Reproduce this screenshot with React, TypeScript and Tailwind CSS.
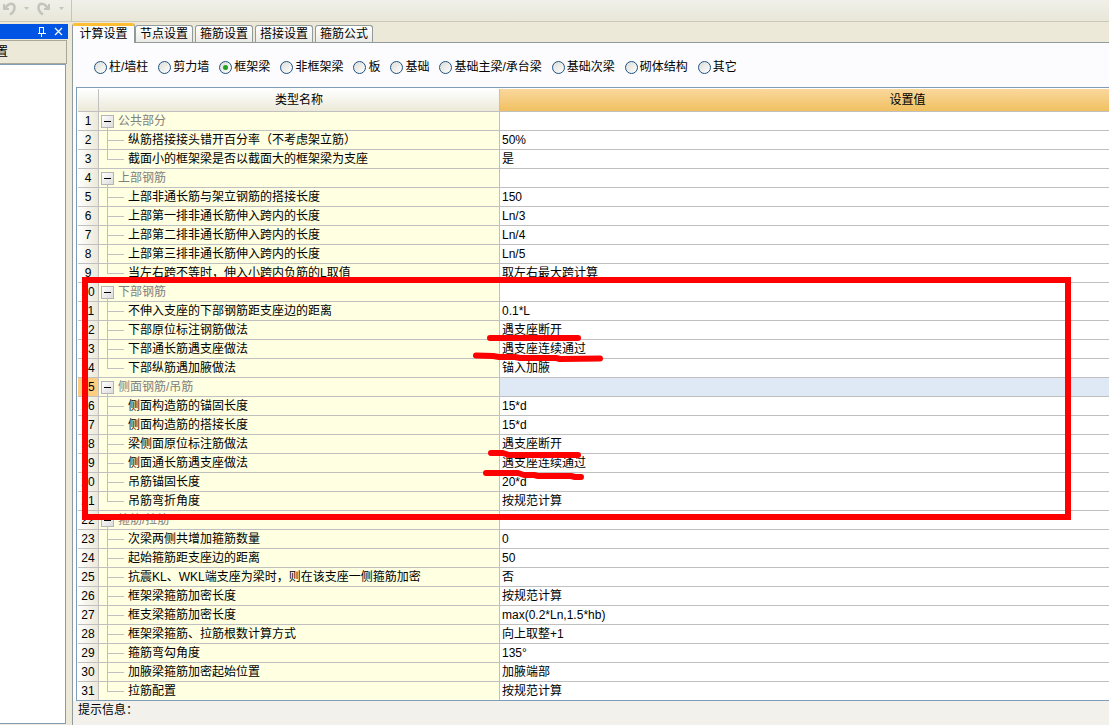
import React, { useState } from "react";
import clsx from "clsx";

interface Row {
  name: string;
  value?: string;
  group?: boolean;
}

const tabs = ["计算设置", "节点设置", "箍筋设置", "搭接设置", "箍筋公式"];

const memberTypes = [
  "柱/墙柱",
  "剪力墙",
  "框架梁",
  "非框架梁",
  "板",
  "基础",
  "基础主梁/承台梁",
  "基础次梁",
  "砌体结构",
  "其它",
];

const rows: Row[] = [
  { name: "公共部分", group: true },
  { name: "纵筋搭接接头错开百分率（不考虑架立筋）", value: "50%" },
  { name: "截面小的框架梁是否以截面大的框架梁为支座", value: "是" },
  { name: "上部钢筋", group: true },
  { name: "上部非通长筋与架立钢筋的搭接长度", value: "150" },
  { name: "上部第一排非通长筋伸入跨内的长度", value: "Ln/3" },
  { name: "上部第二排非通长筋伸入跨内的长度", value: "Ln/4" },
  { name: "上部第三排非通长筋伸入跨内的长度", value: "Ln/5" },
  { name: "当左右跨不等时，伸入小跨内负筋的L取值", value: "取左右最大跨计算" },
  { name: "下部钢筋", group: true },
  { name: "不伸入支座的下部钢筋距支座边的距离", value: "0.1*L" },
  { name: "下部原位标注钢筋做法", value: "遇支座断开" },
  { name: "下部通长筋遇支座做法", value: "遇支座连续通过" },
  { name: "下部纵筋遇加腋做法", value: "锚入加腋" },
  { name: "侧面钢筋/吊筋", group: true },
  { name: "侧面构造筋的锚固长度", value: "15*d" },
  { name: "侧面构造筋的搭接长度", value: "15*d" },
  { name: "梁侧面原位标注筋做法", value: "遇支座断开" },
  { name: "侧面通长筋遇支座做法", value: "遇支座连续通过" },
  { name: "吊筋锚固长度", value: "20*d" },
  { name: "吊筋弯折角度", value: "按规范计算" },
  { name: "箍筋/拉筋", group: true },
  { name: "次梁两侧共增加箍筋数量", value: "0" },
  { name: "起始箍筋距支座边的距离", value: "50" },
  { name: "抗震KL、WKL端支座为梁时，则在该支座一侧箍筋加密", value: "否" },
  { name: "框架梁箍筋加密长度", value: "按规范计算" },
  { name: "框支梁箍筋加密长度", value: "max(0.2*Ln,1.5*hb)" },
  { name: "框架梁箍筋、拉筋根数计算方式", value: "向上取整+1" },
  { name: "箍筋弯勾角度", value: "135°" },
  { name: "加腋梁箍筋加密起始位置", value: "加腋端部" },
  { name: "拉筋配置", value: "按规范计算" },
];

const Toolbar: React.FC = () => (
  <header className="flex h-[22px] border-b border-[#cbc8b8] bg-linear-to-b from-[#f0f0e9] to-[#e9e7d9]">
    <div className="flex w-[72px] items-start gap-2 border-r border-[#c8c5b5] pt-[2px] pl-[2px] text-[#c4c4bd]">
      <button aria-label="撤销">
        <svg width="14" height="14" viewBox="0 0 14 14" fill="none" stroke="currentColor" strokeWidth="2">
          <path d="M2 2v5h5" />
          <path d="M3 6l3-3c3-2.500 6.500-1 6.500 2.500S10.500 11 8 12.500" strokeWidth="2.500" />
        </svg>
      </button>
      <button aria-label="撤销列表" className="pt-[5px]">
        <svg width="5" height="3" fill="currentColor"><path d="M0 0h5L2.500 3z" /></svg>
      </button>
      <button aria-label="恢复">
        <svg width="14" height="14" viewBox="0 0 14 14" fill="none" stroke="currentColor" strokeWidth="2">
          <path d="M12 2v5H7" />
          <path d="M11 6L8 3C5 .5 1.500 2 1.500 5.500S3.500 11 6 12.500" strokeWidth="2.500" />
        </svg>
      </button>
      <button aria-label="恢复列表" className="pt-[5px]">
        <svg width="5" height="3" fill="currentColor"><path d="M0 0h5L2.500 3z" /></svg>
      </button>
    </div>
  </header>
);

const SidePanel: React.FC = () => (
  <aside className="flex w-[68px] shrink-0 flex-col pt-[2px]">
    <div className="flex h-[15px] items-center justify-end gap-2 bg-[#0054e3] pr-[5px] text-white">
      <button aria-label="固定">
        <svg width="8" height="10" fill="none" stroke="currentColor" shapeRendering="crispEdges">
          <path d="M1.500 6V.5h4V6M5 .5v5M0 6.500h8M3.500 7v3" />
        </svg>
      </button>
      <button aria-label="关闭">
        <svg width="9" height="9" fill="none" stroke="currentColor" strokeWidth="1.200">
          <path d="M1 1l7 7M8 1l-7 7" />
        </svg>
      </button>
    </div>
    <div className="mt-px mr-px flex h-6 items-center overflow-hidden border-t border-r border-b border-[#aca899] bg-[#ece9d8]">
      <span className="-ml-1">置</span>
    </div>
    <div className="mr-[2px] mb-px flex-1 border-t border-r border-b border-[#7f9db9] bg-white" />
  </aside>
);

// Connector in front of a child row, cut short below the last child
const Branch: React.FC<{ last: boolean }> = ({ last }) => (
  <span className="ml-2 flex w-[17px] flex-col">
    <span className="h-[10px] border-b border-l border-[#c0c0c0]" />
    <span className={clsx("flex-1 border-[#c0c0c0]", !last && "border-l")} />
  </span>
);

const SettingsTable: React.FC = () => {
  const [selected, setSelected] = useState(14);

  return (
    <table className="w-[1237px] table-fixed border-separate border-spacing-0">
      <colgroup>
        <col className="w-[21px]" />
        <col className="w-[401px]" />
        <col className="w-[815px]" />
      </colgroup>
      <thead>
        <tr className="h-[23px]">
          <td className="border-r border-b border-[#c0c0c0] bg-linear-to-b from-white to-[#ece9d8]" />
          <th className="border-r border-b border-[#c0c0c0] bg-linear-to-b from-white to-[#ece9d8] p-0 font-normal">类型名称</th>
          <th className="border-b border-[#c0c0c0] bg-linear-to-b from-[#fad79b] to-[#f0c060] p-0 font-normal">设置值</th>
        </tr>
      </thead>
      <tbody>
        {rows.map((row, i) => {
          const end = i === rows.length - 1;
          const last = end || !!rows[i + 1].group;
          const line = end ? "h-[18px] border-[#c0c0c0] p-0" : "h-[19px] border-b border-[#c0c0c0] p-0";
          return (
            <tr key={i} onClick={() => setSelected(i)}>
              <td
                className={clsx(
                  line,
                  "border-r text-center",
                  i === selected ? "bg-[#ffcd80]" : "bg-linear-to-r from-white to-[#ece9d8]"
                )}
              >
                {i + 1}
              </td>
              <td className={clsx(line, "border-r bg-[#ffffe1]")}>
                <div className="flex h-[18px]">
                  {row.group ? (
                    <span className="ml-[2px] flex w-[13px] flex-col items-center pt-[3px]">
                      <button
                        aria-label="折叠"
                        className="flex h-[13px] w-[13px] shrink-0 items-center justify-center border border-[#b4b4b4] bg-linear-to-br from-white to-[#dcdcdc]"
                      >
                        <span className="h-px w-[7px] bg-black" />
                      </button>
                      <span className="w-px flex-1 bg-[#c0c0c0]" />
                    </span>
                  ) : (
                    <Branch last={last} />
                  )}
                  <span className={clsx("ml-1 pt-px leading-[17px]", row.group && "text-[#808080]")}>{row.name}</span>
                </div>
              </td>
              <td className={clsx(line, "pl-[2px]", i === selected ? "bg-[#dfe8f5]" : "bg-white")}>{row.value}</td>
            </tr>
          );
        })}
      </tbody>
    </table>
  );
};

// Red pen marks drawn over the sheet
const Markup: React.FC = () => (
  <svg
    className="pointer-events-none absolute top-0 left-0"
    width="1109"
    height="725"
    fill="none"
    stroke="#ff0000"
    strokeWidth="6"
    strokeLinecap="round"
    strokeLinejoin="round"
  >
    <rect x="85" y="280" width="983" height="237" strokeLinejoin="miter" />
    <path d="M490 338H578" />
    <path d="M476 355.500L493 356L499 357H515L520 358H556L560 359L600 358.500" />
    <path d="M491 453H503L509 455H578" />
    <path d="M486 473H518L524 475H534L538 476H571L575 477L581 477" />
  </svg>
);

const App: React.FC = () => {
  const [tab, setTab] = useState(0);
  const [member, setMember] = useState("框架梁");

  return (
    <div className="relative flex min-h-screen flex-col overflow-hidden bg-[#ece9d8] font-['Liberation_Sans','Noto_Sans_CJK_SC',sans-serif] text-[12px] leading-[18px] text-black">
      <Toolbar />
      <div className="flex flex-1">
        <SidePanel />
        <main className="ml-1 flex min-w-0 flex-1 flex-col pt-px">
          <div className="flex h-5">
            <div role="tablist" className="flex items-end">
              {tabs.map((label, i) => (
                <div key={label} className={clsx("flex h-5 items-end", i > 0 && "border-b border-[#919b9c] pr-[2px]")}>
                  <button
                    role="tab"
                    aria-selected={i === tab}
                    onClick={() => setTab(i)}
                    className={clsx(
                      "rounded-t-[3px] text-center leading-[16px] whitespace-nowrap",
                      i === tab
                        ? "h-5 border-t-3 border-r border-l border-t-[#ffbe34] border-r-[#919b9c] border-l-[#919b9c] bg-[#fcfcfe] pb-px"
                        : "h-[17px] border-t border-r border-l border-[#919b9c] bg-linear-to-b from-white to-[#ecebe6]",
                      i === 0 ? "w-[63px]" : "w-[58px]"
                    )}
                  >
                    {label}
                  </button>
                </div>
              ))}
            </div>
            <span className="flex-1 border-b border-[#919b9c]" />
          </div>

          <div className="flex flex-1 flex-col border-l border-[#919b9c] bg-[#f3f1ec]">
            <div className="flex h-11 items-center gap-[10px] bg-[#fcfcfe] pt-1 pl-[21px]">
              {memberTypes.map((type) => (
                <label key={type} className="flex items-center gap-[2px] whitespace-nowrap">
                  <input
                    type="radio"
                    name="member"
                    checked={member === type}
                    onChange={() => setMember(type)}
                    className="flex h-[13px] w-[13px] appearance-none items-center justify-center rounded-full border border-[#1d5281] bg-linear-to-br from-[#dcdcd7] to-white checked:before:h-[5px] checked:before:w-[5px] checked:before:rounded-full checked:before:bg-[#21a121] checked:before:content-['']"
                  />
                  {type}
                </label>
              ))}
            </div>
            <div className="bg-[#fcfcfe] pl-[3px]">
              <div className="overflow-hidden border-t border-b border-l border-[#7f9db9] bg-white pt-px pl-px">
                <SettingsTable />
              </div>
            </div>
            <p className="pl-[5px]">提示信息：</p>
          </div>
        </main>
      </div>
      <Markup />
    </div>
  );
};

export default App;
